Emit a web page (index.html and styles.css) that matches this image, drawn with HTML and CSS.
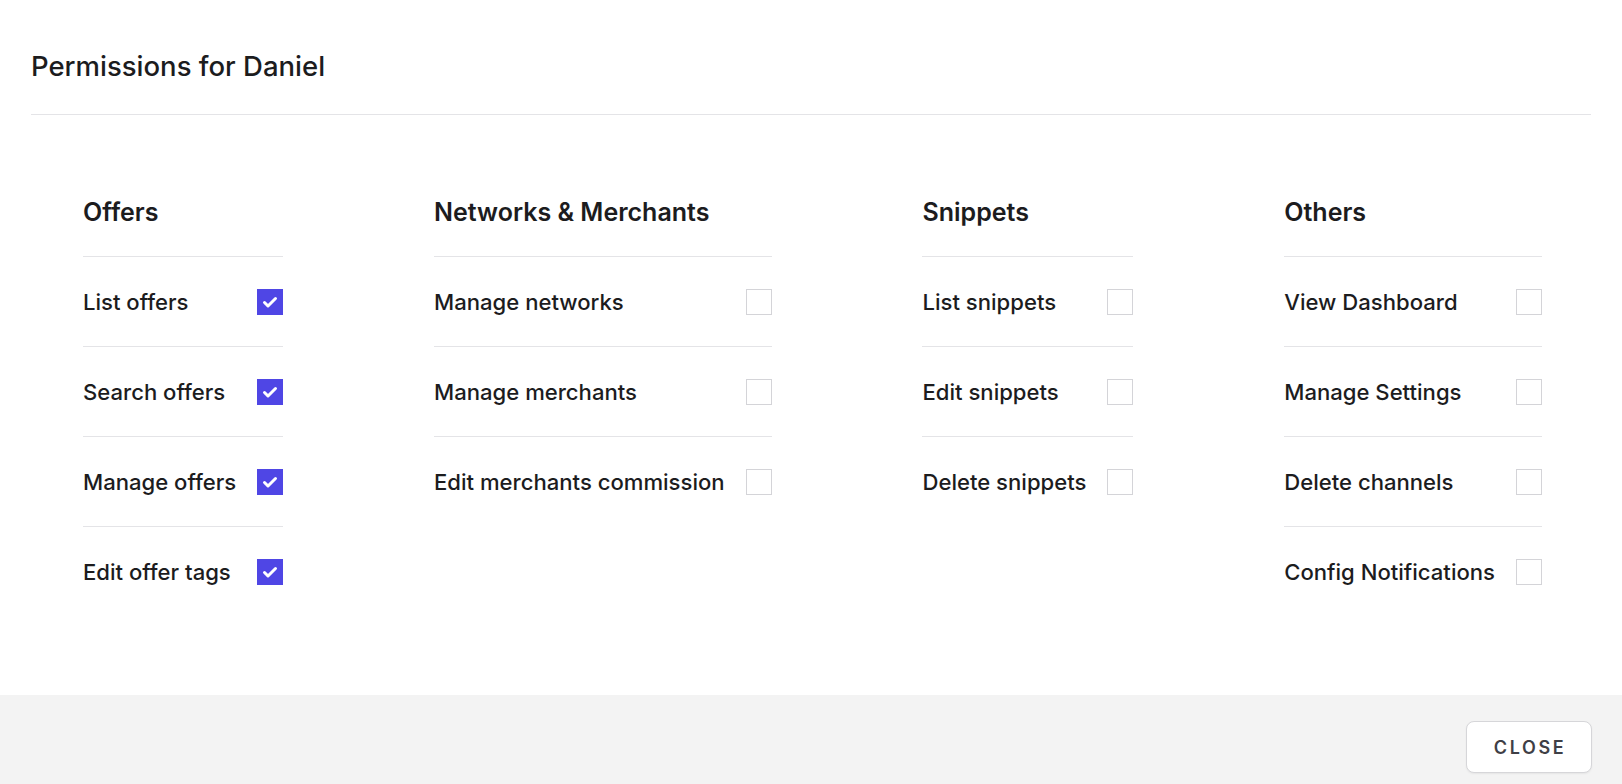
FILE: index.html
```html
<!DOCTYPE html>
<html lang="en">
<head>
<meta charset="utf-8">
<title>Permissions for Daniel</title>
<link rel="stylesheet" href="styles.css">
</head>
<body>
<div class="modal">
  <header class="modal-header">
    <h1 class="modal-title">Permissions for Daniel</h1>
  </header>
  <main class="modal-body">
    <section class="group">
      <h2 class="group-title">Offers</h2>
      <label class="perm"><span class="perm-label">List offers</span><span class="box checked"><svg viewBox="0 0 24 24"><path d="M6.5 12.5l3.5 3.5 7.5-7.5"/></svg></span></label>
      <label class="perm"><span class="perm-label">Search offers</span><span class="box checked"><svg viewBox="0 0 24 24"><path d="M6.5 12.5l3.5 3.5 7.5-7.5"/></svg></span></label>
      <label class="perm"><span class="perm-label">Manage offers</span><span class="box checked"><svg viewBox="0 0 24 24"><path d="M6.5 12.5l3.5 3.5 7.5-7.5"/></svg></span></label>
      <label class="perm"><span class="perm-label">Edit offer tags</span><span class="box checked"><svg viewBox="0 0 24 24"><path d="M6.5 12.5l3.5 3.5 7.5-7.5"/></svg></span></label>
    </section>
    <section class="group">
      <h2 class="group-title">Networks &amp; Merchants</h2>
      <label class="perm"><span class="perm-label">Manage networks</span><span class="box"></span></label>
      <label class="perm"><span class="perm-label">Manage merchants</span><span class="box"></span></label>
      <label class="perm"><span class="perm-label">Edit merchants commission</span><span class="box"></span></label>
    </section>
    <section class="group">
      <h2 class="group-title">Snippets</h2>
      <label class="perm"><span class="perm-label">List snippets</span><span class="box"></span></label>
      <label class="perm"><span class="perm-label">Edit snippets</span><span class="box"></span></label>
      <label class="perm"><span class="perm-label">Delete snippets</span><span class="box"></span></label>
    </section>
    <section class="group">
      <h2 class="group-title">Others</h2>
      <label class="perm"><span class="perm-label">View Dashboard</span><span class="box"></span></label>
      <label class="perm"><span class="perm-label">Manage Settings</span><span class="box"></span></label>
      <label class="perm"><span class="perm-label">Delete channels</span><span class="box"></span></label>
      <label class="perm"><span class="perm-label">Config Notifications</span><span class="box"></span></label>
    </section>
  </main>
  <footer class="modal-footer">
    <button class="btn-close" type="button">CLOSE</button>
  </footer>
</div>
</body>
</html>
```
FILE: styles.css
```css
* { box-sizing: border-box; }
html, body {
  margin: 0;
  height: 784px;
  overflow: hidden;
  background: #ffffff;
}
body {
  font-family: Inter, "Noto Sans", "Liberation Sans", sans-serif;
  color: #1c1c1e;
}
.modal {
  height: 784px;
  display: flex;
  flex-direction: column;
}
.modal-header {
  margin: 0 31px;
  padding-top: 50px;
  padding-bottom: 32px;
  border-bottom: 1px solid #e4e4e7;
}
.modal-title {
  margin: 0;
  font-size: 27.5px;
  line-height: 32px;
  font-weight: 500;
  color: #1c1c1e;
}
.modal-body {
  flex: 1;
  display: flex;
  justify-content: space-between;
  align-items: flex-start;
  padding: 83px 80px 0 83px;
}
.group {
  display: flex;
  flex-direction: column;
}
.group-title {
  margin: 0;
  font-size: 25px;
  line-height: 28px;
  font-weight: 600;
  padding-bottom: 30px;
  border-bottom: 1px solid #e4e4e7;
  color: #1c1c1e;
}
.perm {
  display: flex;
  align-items: center;
  justify-content: space-between;
  gap: 21px;
  height: 90px;
  border-bottom: 1px solid #e4e4e7;
  font-size: 22.1px;
  font-weight: 500;
  color: #1c1c1e;
}
.perm:last-child {
  border-bottom: none;
}
.box {
  flex: none;
  width: 26px;
  height: 26px;
  border: 1px solid #d4d4d8;
  background: #ffffff;
  display: flex;
  align-items: center;
  justify-content: center;
}
.box.checked {
  background: #4f46e5;
  border-color: #4f46e5;
}
.box svg {
  width: 24px;
  height: 24px;
  fill: none;
  stroke: #ffffff;
  stroke-width: 3;
  stroke-linecap: round;
  stroke-linejoin: round;
}
.modal-footer {
  flex: none;
  height: 89px;
  background: #f3f3f3;
  display: flex;
  justify-content: flex-end;
  align-items: flex-start;
  padding: 26px 30px 0 0;
}
.btn-close {
  width: 126px;
  height: 52px;
  background: #ffffff;
  border: 1px solid #d6d6d9;
  border-radius: 8px;
  box-shadow: 0 1px 2px rgba(0, 0, 0, 0.06);
  font-family: Inter, "Noto Sans", "Liberation Sans", sans-serif;
  font-size: 18px;
  font-weight: 600;
  letter-spacing: 2.6px;
  color: #3f3f46;
  padding: 0 0 0 2px;
}
```
